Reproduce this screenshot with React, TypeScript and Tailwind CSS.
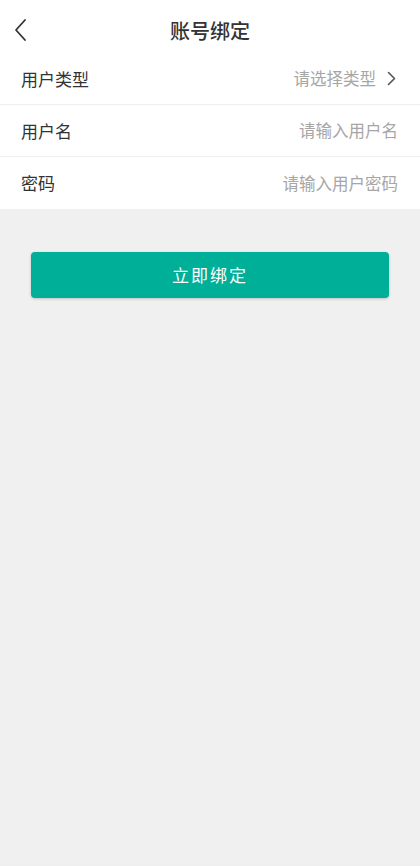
import React from "react";

const rows = [
    { label: "用户类型", placeholder: "请选择类型", arrow: true },
    { label: "用户名", placeholder: "请输入用户名", arrow: false },
    { label: "密码", placeholder: "请输入用户密码", arrow: false },
];

const App: React.FC = () => {
    return (
        <div className="min-h-[866px] bg-[#f0f0f0] font-['Noto_Sans_CJK_SC',sans-serif]">
            {/* Header */}
            <div className="relative h-[53px] bg-white flex items-center justify-center">
                <button className="absolute left-[10px] top-[16px] w-[20px] h-[28px] flex items-center justify-center">
                    <svg width="14" height="24" viewBox="0 0 14 24" fill="none">
                        <path d="M12 2 L3 12 L12 22" stroke="#333" strokeWidth="1.8" strokeLinecap="round" strokeLinejoin="round" />
                    </svg>
                </button>
                <h1 className="text-[20px] font-medium text-[#333] mt-[8px]">账号绑定</h1>
            </div>

            {/* Form rows */}
            <div className="bg-white">
                {rows.map((r, i) => (
                    <div
                        key={r.label}
                        className={`h-[52px] flex items-center justify-between pl-[21px] pr-[22px] ${i < rows.length - 1 ? "border-b border-[#eeeeee]" : ""}`}
                    >
                        <span className="text-[17px] text-[#333]">{r.label}</span>
                        <div className="flex items-center">
                            <span className="text-[16.5px] text-[#a6a6a6]">{r.placeholder}</span>
                            {r.arrow && (
                                <svg className="ml-[11px] mr-[2px]" width="9" height="15" viewBox="0 0 9 15" fill="none">
                                    <path d="M1.5 1.5 L7.5 7.5 L1.5 13.5" stroke="#555" strokeWidth="1.6" strokeLinecap="round" strokeLinejoin="round" />
                                </svg>
                            )}
                        </div>
                    </div>
                ))}
            </div>

            {/* Bind button */}
            <div className="px-[31px] pt-[43px]">
                <button className="w-full h-[46px] rounded-[4px] bg-[#00af98] text-white text-[17px] tracking-[2px] shadow-[0_1px_3px_rgba(0,0,0,0.2)]">
                    立即绑定
                </button>
            </div>
        </div>
    );
};

export default App;
